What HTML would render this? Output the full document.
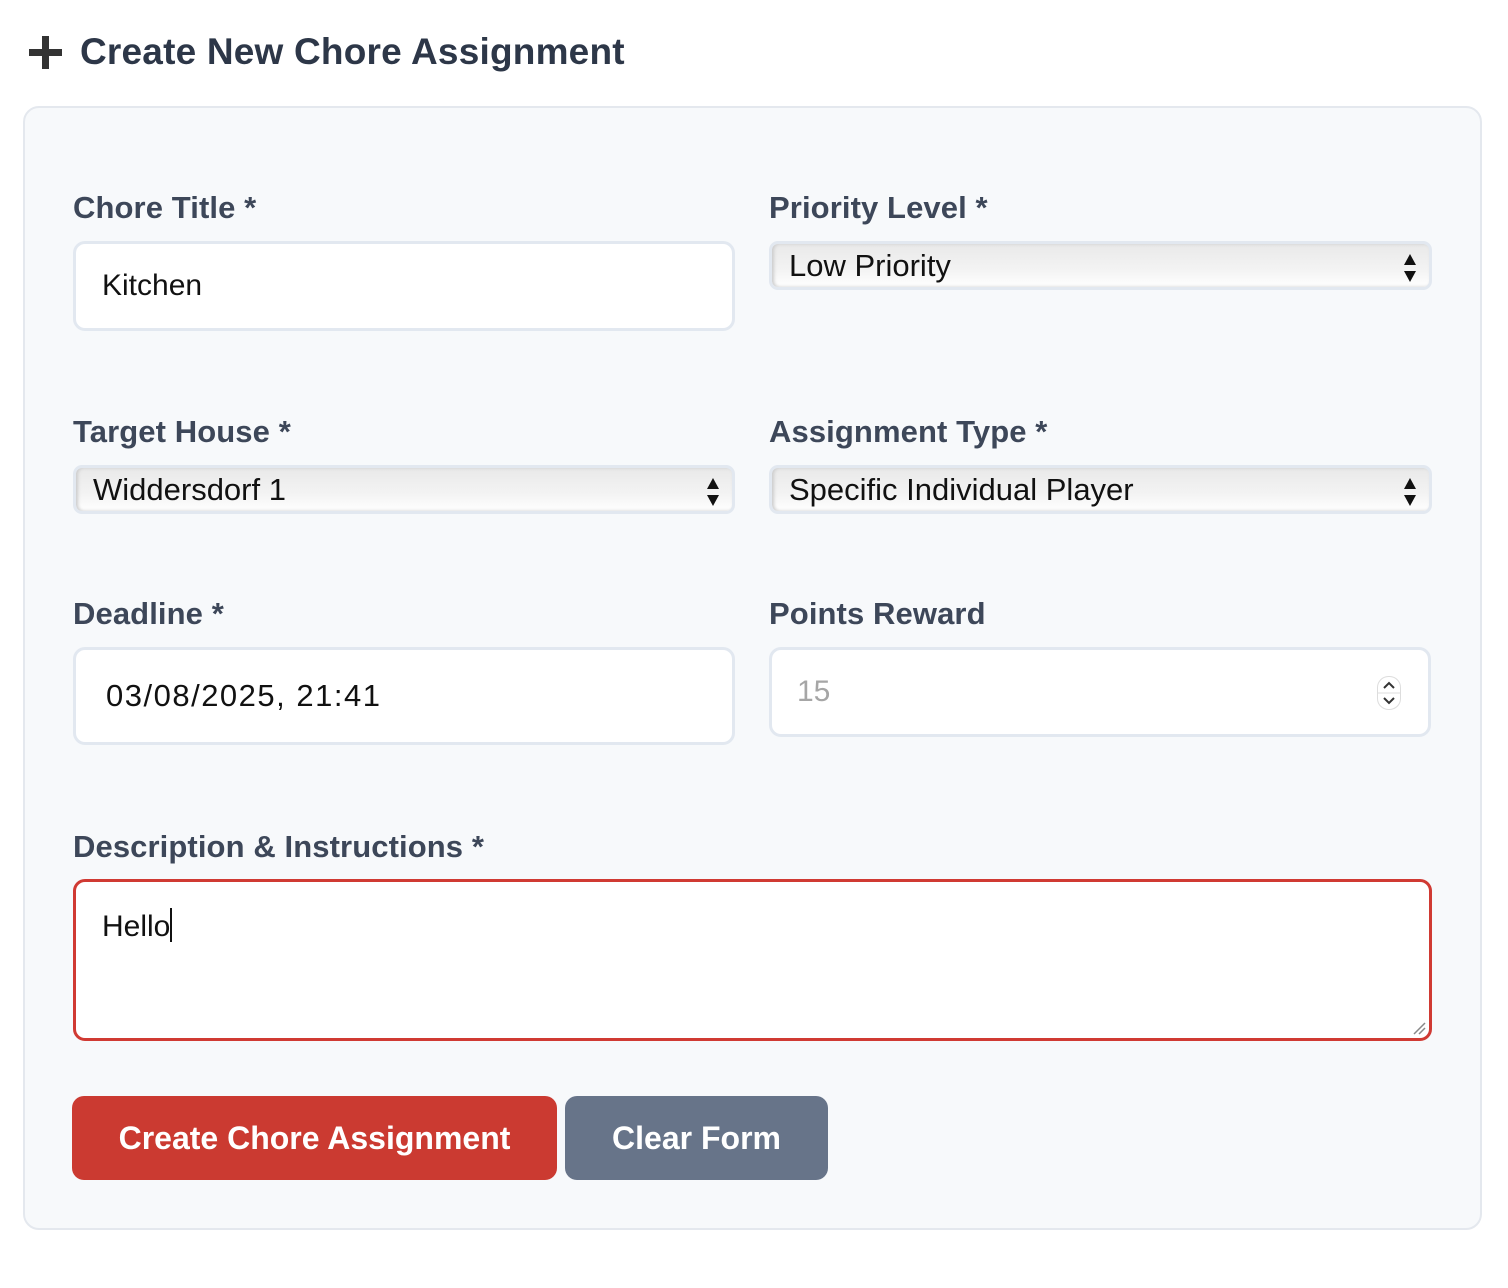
<!DOCTYPE html>
<html><head><style>
*{box-sizing:border-box;margin:0;padding:0}
body{width:1508px;height:1288px;background:#fff;font-family:"Liberation Sans",sans-serif;position:relative;overflow:hidden}
.a{position:absolute}
h1{position:absolute;left:80px;top:31px;font-size:37px;font-weight:bold;color:#2d3748;letter-spacing:0.2px;white-space:nowrap}
.card{left:23px;top:106px;width:1459px;height:1124px;background:#f7f9fb;border:2px solid #e4e8ee;border-radius:16px}
.lab{font-size:31px;font-weight:bold;color:#3d4759;white-space:nowrap;letter-spacing:0.1px}
.inp{background:#fff;border:3px solid #e2e8f0;border-radius:12px;font-size:30px;color:#111;display:flex;align-items:center}
.sel{border:3px solid #e2e8f0;border-radius:9px;background:linear-gradient(#e9e9e9,#f3f3f3 60%,#fff);font-size:31px;color:#111;display:flex;align-items:center;padding-left:17px;box-shadow:inset 2px 0 3px #ccc}
.arr{position:absolute;right:12px;top:7px;width:14px}
.btn{border-radius:12px;color:#fff;font-size:32px;font-weight:bold;display:flex;align-items:center;justify-content:center;white-space:nowrap}
</style></head><body>
<svg class="a" style="left:29px;top:36px" width="33" height="33"><rect x="13" y="0" width="7" height="33" fill="#333"/><rect x="0" y="13" width="33" height="7" fill="#333"/></svg>
<h1>Create New Chore Assignment</h1>
<div class="a card"></div>

<div class="a lab" style="left:73px;top:190px">Chore Title *</div>
<div class="a inp" style="left:73px;top:241px;width:662px;height:90px;padding-left:26px">Kitchen</div>

<div class="a lab" style="left:769px;top:190px">Priority Level *</div>
<div class="a sel" style="left:769px;top:241px;width:663px;height:49px">Low Priority
<svg class="arr" height="34" viewBox="0 0 14 34"><path d="M7 3L13 14H1Z M7 31L13 20H1Z" fill="#111"/></svg></div>

<div class="a lab" style="left:73px;top:414px">Target House *</div>
<div class="a sel" style="left:73px;top:465px;width:662px;height:49px">Widdersdorf 1
<svg class="arr" height="34" viewBox="0 0 14 34"><path d="M7 3L13 14H1Z M7 31L13 20H1Z" fill="#111"/></svg></div>

<div class="a lab" style="left:769px;top:414px">Assignment Type *</div>
<div class="a sel" style="left:769px;top:465px;width:663px;height:49px">Specific Individual Player
<svg class="arr" height="34" viewBox="0 0 14 34"><path d="M7 3L13 14H1Z M7 31L13 20H1Z" fill="#111"/></svg></div>

<div class="a lab" style="left:73px;top:596px">Deadline *</div>
<div class="a inp" style="left:73px;top:647px;width:662px;height:98px;padding-left:30px;letter-spacing:1.5px;font-size:31px">03/08/2025, 21:41</div>

<div class="a lab" style="left:769px;top:596px">Points Reward</div>
<div class="a inp" style="left:769px;top:647px;width:662px;height:90px;padding-left:25px;color:#a6a6a6">15</div>
<svg class="a" style="left:1377px;top:676px" width="24" height="34"><rect x="0.5" y="0.5" width="23" height="33" rx="11" fill="#fff" stroke="#ddd"/><line x1="1" y1="17" x2="23" y2="17" stroke="#ddd"/><path d="M7 12L12 7L17 12M7 22L12 27L17 22" fill="none" stroke="#333" stroke-width="2"/></svg>

<div class="a lab" style="left:73px;top:829px">Description &amp; Instructions *</div>
<div class="a" style="left:73px;top:879px;width:1359px;height:162px;background:#fff;border:3px solid #d03a33;border-radius:12px;font-size:30px;color:#111;padding:26px 0 0 26px">Hello<span style="display:inline-block;width:2px;height:34px;background:#111;vertical-align:-6px"></span></div>
<svg class="a" style="left:1412px;top:1021px" width="14" height="14"><path d="M2 13L13 2M7 13L13 7" stroke="#888" stroke-width="1.5"/></svg>

<div class="a btn" style="left:72px;top:1096px;width:485px;height:84px;background:#cb3a31">Create Chore Assignment</div>
<div class="a btn" style="left:565px;top:1096px;width:263px;height:84px;background:#677489">Clear Form</div>
</body></html>
